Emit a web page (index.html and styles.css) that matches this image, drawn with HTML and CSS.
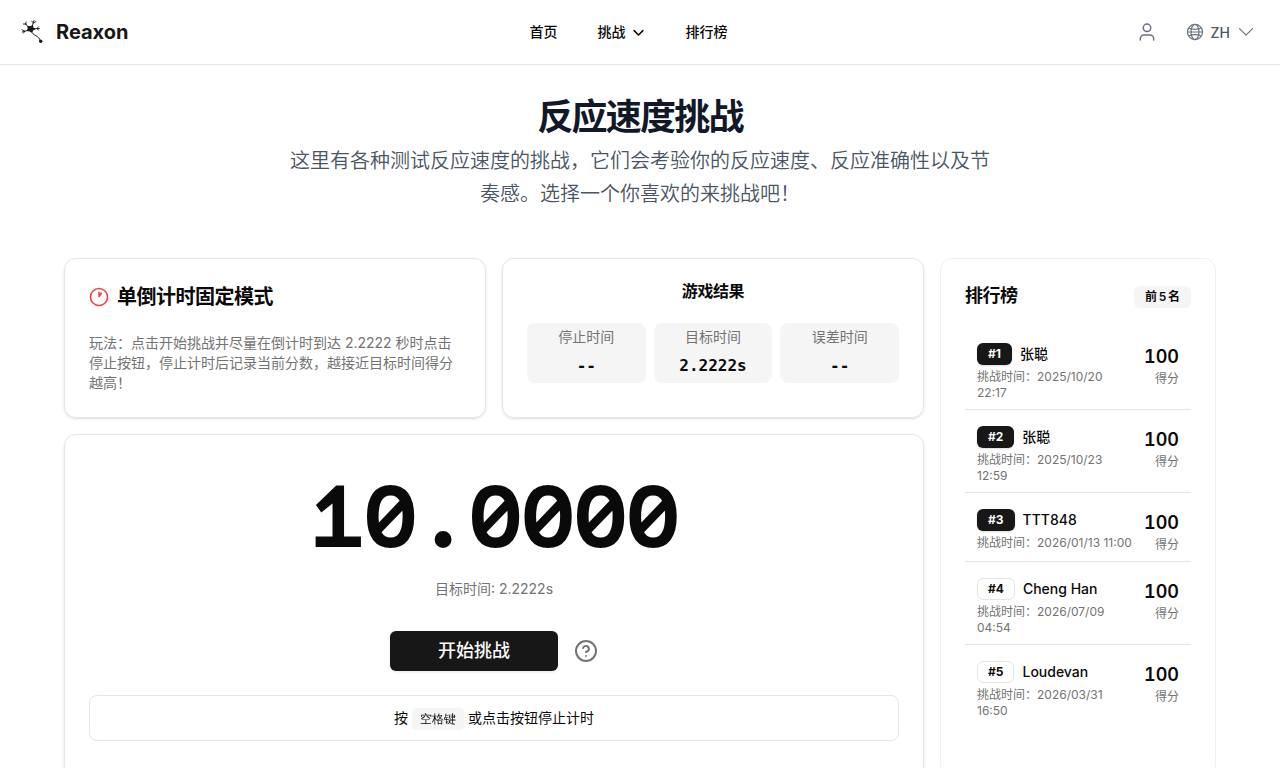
FILE: index.html
```html
<!DOCTYPE html>
<html lang="zh">
<head>
  <meta charset="UTF-8" />
  <meta name="viewport" content="width=device-width, initial-scale=1" />
  <title>Reaxon</title>
  <link rel="stylesheet" href="styles.css">
</head>
<body>

  <header class="header">
    <a class="brand" href="#">
      <svg class="brand-logo" viewBox="0 0 24 26" fill="none" stroke="#171717" stroke-linecap="round">
        <path d="M9 9L5.300 4.500M5.800 5.200L3.300 5M5.800 5.200L6 3M12 8L14 1.500M13.300 4L11.800 2.200M13.300 4L16 2.500M12 10L19.500 9.500M17 9.600L18.500 7.800M17 9.600L18.500 11.200M9 11L2.200 13M4.800 12.200L2 10.800M4.800 12.200L3.500 14" stroke-width=".9"/>
        <path d="M8 7.500L10.500 7.800L12.500 6.800L13 9L14.500 10L12.700 11L11.700 13L9.700 11.800L7.500 11.500L8.300 9.500Z" fill="#171717" stroke-width="1.200"/>
        <path d="M11.500 12C12.500 17.500 19 15.500 20.300 22" stroke-width="1"/>
        <circle cx="20.700" cy="22.300" r="1.700" fill="#171717" stroke="none"/>
      </svg>
      <span>Reaxon</span>
    </a>
    <nav class="nav">
      <a href="#">首页</a>
      <a href="#">挑战
        <svg class="nav-arrow" viewBox="0 0 24 24" fill="none" stroke="currentColor" stroke-width="2.400" stroke-linecap="round" stroke-linejoin="round"><path d="m5 9 7 7 7-7"/></svg>
      </a>
      <a href="#">排行榜</a>
    </nav>
    <div class="tools">
      <svg class="user" viewBox="0 0 24 24" fill="none" stroke="currentColor" stroke-width="1.800" stroke-linecap="round" stroke-linejoin="round"><path d="M20 21.500v-1.500a4.500 4.500 0 0 0-4.500-4.500h-7A4.500 4.500 0 0 0 4 20V21.500"/><circle cx="12" cy="7" r="4.500"/></svg>
      <div class="lang">
        <svg class="globe" viewBox="0 0 18 18" fill="none" stroke="currentColor" stroke-width="1.200">
          <circle cx="9" cy="9" r="7.600"/>
          <ellipse cx="9" cy="9" rx="4" ry="7.600"/>
          <path d="M1.400 9h15.200M2.800 5c3.500 1.500 8.900 1.500 12.400 0M2.800 13c3.500-1.500 8.900-1.500 12.400 0"/>
        </svg>
        <span>ZH</span>
        <svg class="lang-arrow" viewBox="0 0 16 16" fill="none" stroke="currentColor" stroke-width="1.200" stroke-linecap="round" stroke-linejoin="round"><path d="M1.500 4.700L8 11.200l6.500-6.500"/></svg>
      </div>
    </div>
  </header>

  <main class="container">
    <section class="hero">
      <h1>反应速度挑战</h1>
      <p>这里有各种测试反应速度的挑战，它们会考验你的反应速度、反应准确性以及节奏感。选择一个你喜欢的来挑战吧！</p>
    </section>

    <div class="layout">
      <div class="game">
        <section class="card mode">
          <h2>
            <svg viewBox="0 0 20 20" fill="none"><circle cx="10" cy="10" r="8.500" stroke="#ef4444" stroke-width="1.600"/><path d="M9.200 4.800L10.200 4.500L10.500 5.500L12.800 5.400L13 7L10.300 10.400L9.300 10Z" fill="#ef4444"/></svg>
            单倒计时固定模式
          </h2>
          <p>玩法：点击开始挑战并尽量在倒计时到达 2.2222 秒时点击停止按钮，停止计时后记录当前分数，越接近目标时间得分越高！</p>
        </section>

        <section class="card result">
          <h3>游戏结果</h3>
          <div class="stats">
            <div class="stat"><span>停止时间</span><strong>--</strong></div>
            <div class="stat"><span>目标时间</span><strong>2.2222s</strong></div>
            <div class="stat"><span>误差时间</span><strong>--</strong></div>
          </div>
        </section>

        <section class="card play">
          <div class="timer">10.0000</div>
          <p class="target">目标时间: 2.2222s</p>
          <div class="actions">
            <button class="start">开始挑战</button>
            <svg class="help" viewBox="0 0 24 24" fill="none" stroke="currentColor" stroke-width="2" stroke-linecap="round" stroke-linejoin="round"><circle cx="12" cy="12" r="10"/><path d="M9.090 9a3 3 0 0 1 5.830 1c0 2-3 3-3 3"/><path d="M12 17h.01"/></svg>
          </div>
          <div class="hint">按 <kbd>空格键</kbd> 或点击按钮停止计时</div>
        </section>
      </div>

      <aside class="card board">
        <div class="board-head">
          <h2>排行榜</h2>
          <span class="badge light">前 5 名</span>
        </div>
        <ul class="rank">
          <li>
            <div class="info">
              <div class="player"><span class="badge dark">#1</span>张聪</div>
              <p>挑战时间：2025/10/20 22:17</p>
            </div>
            <div class="score"><strong>100</strong><span>得分</span></div>
          </li>
          <li>
            <div class="info">
              <div class="player"><span class="badge dark">#2</span>张聪</div>
              <p>挑战时间：2025/10/23 12:59</p>
            </div>
            <div class="score"><strong>100</strong><span>得分</span></div>
          </li>
          <li>
            <div class="info">
              <div class="player"><span class="badge dark">#3</span>TTT848</div>
              <p>挑战时间：2026/01/13 11:00</p>
            </div>
            <div class="score"><strong>100</strong><span>得分</span></div>
          </li>
          <li>
            <div class="info">
              <div class="player"><span class="badge">#4</span>Cheng Han</div>
              <p>挑战时间：2026/07/09 04:54</p>
            </div>
            <div class="score"><strong>100</strong><span>得分</span></div>
          </li>
          <li>
            <div class="info">
              <div class="player"><span class="badge">#5</span>Loudevan</div>
              <p>挑战时间：2026/03/31 16:50</p>
            </div>
            <div class="score"><strong>100</strong><span>得分</span></div>
          </li>
        </ul>
      </aside>
    </div>
  </main>

</body>
</html>
```

FILE: styles.css
```css
:root {
  --text: #0a0a0a;
  --muted: #737373;
  --border: #e5e5e5;
  --soft: #f5f5f5;
  --dark: #171717;
}
* {
  box-sizing: border-box;
  margin: 0;
  padding: 0;
}
body {
  height: 768px;
  overflow: hidden;
  background: #fff;
  color: var(--text);
  font-family: Inter, "Noto Sans CJK SC", sans-serif;
  font-size: 16px;
  line-height: 1.5;
}
svg {
  display: block;
  flex-shrink: 0;
}

/* Header */
.header {
  height: 65px;
  padding: 0 26px 0 20px;
  border-bottom: 1px solid #e5e7eb;
  display: grid;
  grid-template-columns: 1fr auto 1fr;
  align-items: center;
}
.header a {
  color: inherit;
  text-decoration: none;
}
.brand {
  display: flex;
  align-items: center;
  gap: 12px;
  font-size: 20px;
  font-weight: 700;
}
.header .brand {
  color: var(--dark);
}
.brand-logo {
  width: 24px;
  height: 26px;
}
.nav {
  display: flex;
  gap: 40px;
  padding: 0 17px 2px 0;
  font-size: 14px;
  font-weight: 500;
}
.nav a {
  display: flex;
  align-items: center;
  gap: 5px;
}
.nav-arrow {
  width: 15px;
  height: 15px;
  margin-top: 2px;
}
.tools {
  display: flex;
  align-items: center;
  justify-content: flex-end;
  gap: 29px;
  color: #6b7280;
}
.user {
  width: 20px;
  height: 20px;
}
.lang {
  display: flex;
  align-items: center;
  font-size: 14px;
  font-weight: 500;
}
.lang span {
  margin: 0 8px 0 7px;
  color: #4b5563;
}
.globe {
  width: 18px;
  height: 18px;
}
.lang-arrow {
  width: 16px;
  height: 16px;
}

/* Hero */
.container {
  width: 1152px;
  margin: 0 auto;
}
.hero {
  width: 704px;
  margin: 0 auto;
  padding-top: 32px;
  text-align: center;
}
.hero h1 {
  font-size: 36px;
  line-height: 40px;
  letter-spacing: -0.05em;
  color: #111827;
}
.hero p {
  margin-top: 8px;
  font-size: 20px;
  line-height: 33px;
  font-weight: 350;
  color: #4b5563;
}

/* Cards */
.layout {
  margin-top: 47px;
  display: grid;
  grid-template-columns: 860px 276px;
  gap: 16px;
}
.game {
  display: grid;
  grid-template-columns: 1fr 1fr;
  grid-template-rows: 160px 343px;
  gap: 16px;
}
.card {
  border: 1px solid var(--border);
  border-radius: 12px;
  padding: 24px;
  box-shadow: 0 1px 3px rgba(0,0,0,0.1), 0 1px 2px -1px rgba(0,0,0,0.1);
}
.mode h2 {
  display: flex;
  align-items: center;
  gap: 8px;
  font-size: 20px;
  line-height: 28px;
  font-weight: 600;
  letter-spacing: -0.025em;
}
.mode svg {
  width: 20px;
  height: 20px;
}
.mode p {
  margin-top: 22px;
  font-size: 14px;
  line-height: 20px;
  color: var(--muted);
}
.result h3 {
  margin-top: -4px;
  font-size: 16px;
  line-height: 24px;
  font-weight: 600;
  letter-spacing: -0.025em;
  text-align: center;
}
.stats {
  margin-top: 20px;
  display: grid;
  grid-template-columns: repeat(3, 1fr);
  gap: 8px;
}
.stat {
  height: 60px;
  padding-top: 4px;
  border-radius: 8px;
  background: var(--soft);
  text-align: center;
}
.stat span,
.stat strong {
  display: block;
}
.stat span {
  font-size: 14px;
  line-height: 20px;
  color: var(--muted);
}
.stat strong {
  margin-top: 7px;
  font-family: "DejaVu Sans Mono", monospace;
  font-size: 16px;
  line-height: 24px;
}

/* Play area */
.play {
  grid-column: span 2;
  text-align: center;
}
.timer {
  margin-top: 9px;
  font-family: "Sometype Mono", "Liberation Mono", monospace;
  font-size: 96px;
  line-height: 96px;
  font-weight: 700;
  letter-spacing: -0.033em;
}
.target {
  margin-top: 15px;
  font-size: 14px;
  line-height: 20px;
  color: var(--muted);
}
.actions {
  margin-top: 32px;
  display: flex;
  align-items: center;
  justify-content: center;
  gap: 16px;
}
.start {
  width: 168px;
  height: 40px;
  padding-bottom: 2px;
  border: none;
  border-radius: 6px;
  background: var(--dark);
  color: #fafafa;
  font: inherit;
  font-size: 18px;
  font-weight: 500;
  box-shadow: 0 1px 3px rgba(0,0,0,0.1);
  cursor: pointer;
}
.help {
  width: 24px;
  height: 24px;
  color: var(--muted);
}
.hint {
  height: 46px;
  margin-top: 24px;
  border: 1px solid var(--border);
  border-radius: 8px;
  font-size: 14px;
  line-height: 44px;
}
.hint kbd {
  display: inline-block;
  padding: 3px 8px;
  border-radius: 4px;
  background: var(--soft);
  font-family: "WenQuanYi Zen Hei", "Noto Sans CJK SC", monospace;
  font-size: 12px;
  line-height: 16px;
}

/* Leaderboard */
.board {
  border-color: #f0f0f0;
  box-shadow: none;
}
.board-head {
  display: flex;
  align-items: center;
  justify-content: space-between;
  height: 28px;
}
.board-head h2 {
  font-size: 18px;
  line-height: 26px;
  padding-bottom: 2px;
  font-weight: 600;
  letter-spacing: -0.025em;
}
.badge {
  padding: 2px 10px;
  border: 1px solid var(--border);
  border-radius: 6px;
  font-size: 12px;
  line-height: 16px;
  font-weight: 600;
}
.badge.light {
  border-color: transparent;
  background: var(--soft);
  word-spacing: -1.3px;
}
.badge.dark {
  border-color: transparent;
  background: var(--dark);
  color: #fafafa;
  box-shadow: 0 1px 2px rgba(0,0,0,0.15);
}
.player .badge {
  font-weight: 700;
}
.rank {
  margin-top: 16px;
  list-style: none;
}
.rank li {
  display: flex;
  align-items: flex-start;
  justify-content: space-between;
  padding: 16px 12px 8px;
  border-bottom: 1px solid var(--border);
}
.rank li:last-child {
  border-bottom: none;
}
.info {
  width: 157px;
}
.player {
  display: flex;
  align-items: center;
  gap: 8px;
  font-size: 14px;
  line-height: 22px;
  font-weight: 500;
}
.info p {
  margin-top: 4px;
  font-size: 12px;
  line-height: 16px;
  color: var(--muted);
}
.score {
  flex-shrink: 0;
  text-align: right;
}
.score strong,
.score span {
  display: block;
}
.score strong {
  font-size: 18px;
  line-height: 28px;
  font-weight: 600;
  font-variant-numeric: tabular-nums;
}
.score span {
  font-size: 12px;
  line-height: 16px;
  color: var(--muted);
}
```
